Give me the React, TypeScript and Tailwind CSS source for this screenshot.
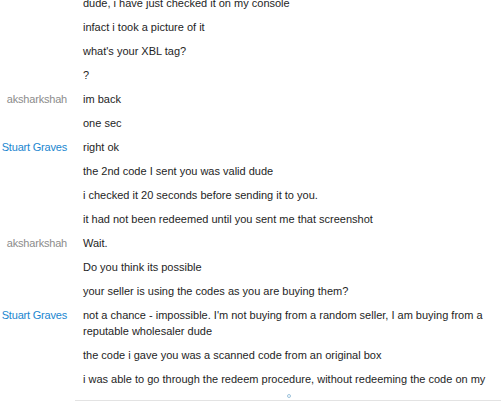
const rows: { name?: string; who?: "me" | "them"; text: string }[] = [
    { text: "dude, i have just checked it on my console" },
    { text: "infact i took a picture of it" },
    { text: "what's your XBL tag?" },
    { text: "?" },
    { name: "aksharkshah", who: "me", text: "im back" },
    { text: "one sec" },
    { name: "Stuart Graves", who: "them", text: "right ok" },
    { text: "the 2nd code I sent you was valid dude" },
    { text: "i checked it 20 seconds before sending it to you." },
    { text: "it had not been redeemed until you sent me that screenshot" },
    { name: "aksharkshah", who: "me", text: "Wait." },
    { text: "Do you think its possible" },
    { text: "your seller is using the codes as you are buying them?" },
    {
        name: "Stuart Graves",
        who: "them",
        text: "not a chance - impossible. I'm not buying from a random seller, I am buying from a reputable wholesaler dude",
    },
    { text: "the code i gave you was a scanned code from an original box" },
    { text: "i was able to go through the redeem procedure, without redeeming the code on my" },
];

export default function App() {
    return (
        <div className="relative h-[403px] w-[501px] overflow-hidden bg-white font-['Liberation_Sans',sans-serif] text-[11px] leading-[16px]">
            <div className="-mt-[5px] flex flex-col gap-[8px]">
                {rows.map((r, i) => (
                    <div key={i} className="grid grid-cols-[67px_1fr] gap-x-[16px] pr-[6px]">
                        <div
                            className={
                                "flex justify-end whitespace-nowrap tracking-[-0.2px] " +
                                (r.who === "me" ? "text-[#8c8c8c]" : "text-[#1a86d0]")
                            }
                        >
                            <span>{r.name}</span>
                        </div>
                        <div className="text-[#1e1e1e]">{r.text}</div>
                    </div>
                ))}
            </div>
            {/* input area edge */}
            <div className="absolute bottom-0 left-[75px] right-0 h-[3px] border-t border-[#e3e3e3] bg-white" />
            <div className="absolute left-[287px] top-[394px] h-[4px] w-[4px] rounded-full border border-[#9cc3dc]" />
        </div>
    );
}
